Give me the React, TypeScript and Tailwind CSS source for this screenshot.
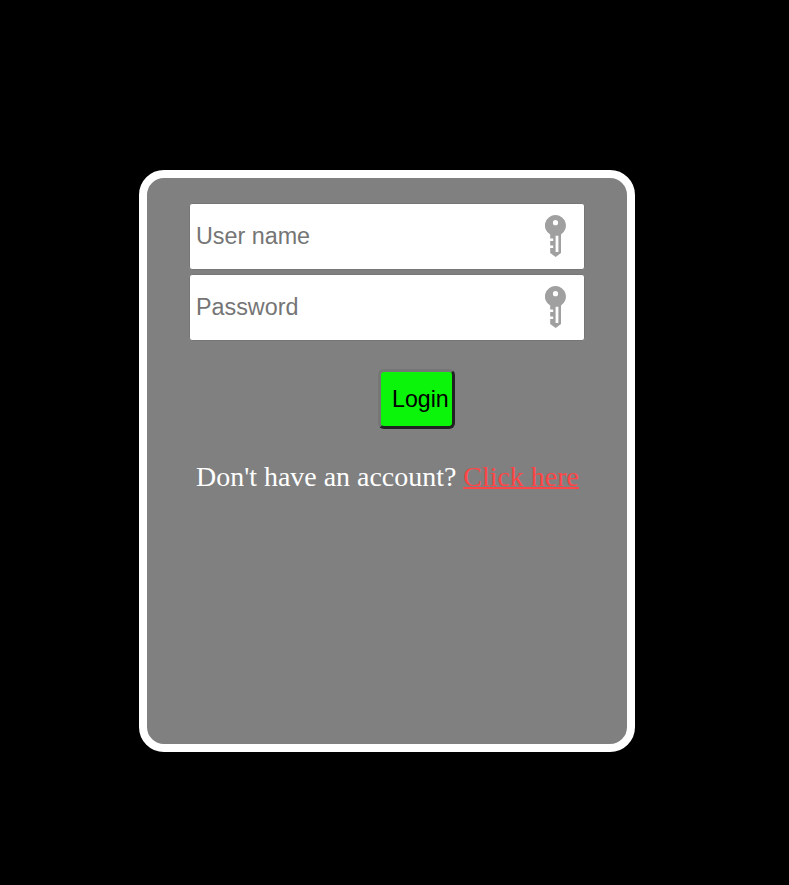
import React from "react";

function KeyIcon() {
  return (
    <svg width="21" height="42" viewBox="0 0 21 42" className="mb-0.5 block shrink-0" aria-hidden="true">
      <path
        fill="#a0a0a0"
        fillRule="evenodd"
        d="M10.5 0A10.5 10.5 0 0 1 16 19.4V38L10.7 42L5.2 38V33H8.2V30.6H5.2V26H8.2V23.6H5.2V19.6A10.5 10.5 0 0 1 10.5 0ZM10.5 5.1a2.6 2.6 0 1 0 0 5.2a2.6 2.6 0 1 0 0-5.2ZM10.6 20.8V37H13.4V20.8Z"
      />
    </svg>
  );
}

function Field({ type, placeholder }: { type: string; placeholder: string }) {
  return (
    <div className="flex h-[67px] w-[396px] items-center rounded-[3px] border border-[#767676] bg-white pr-[18px] pl-1.5">
      <input
        type={type}
        placeholder={placeholder}
        className="h-full min-w-0 flex-1 bg-transparent font-['Liberation_Sans',Arial,sans-serif] text-[23.33px] text-black outline-none placeholder:text-[#757575]"
      />
      <KeyIcon />
    </div>
  );
}

export default function App() {
  return (
    <main className="h-[885px] w-full overflow-hidden bg-black pt-[170px] pl-[139px]">
      <form className="flex h-[582px] w-[496px] flex-col items-center rounded-[25px] border-8 border-white bg-[#808080] pt-[25px]">
        <div className="flex flex-col gap-1">
          <Field type="text" placeholder="User name" />
          <Field type="password" placeholder="Password" />
        </div>
        <button
          type="button"
          className="mt-7 ml-[59px] h-[60px] w-[77px] rounded-[6px] border-[3px] border-t-[#767676] border-r-[#212121] border-b-[#212121] border-l-[#767676] bg-[#0bf50b] pl-[11px] text-left font-['Liberation_Sans',Arial,sans-serif] text-[23.2px] text-black"
        >
          Login
        </button>
        <p className="mt-8 ml-px font-['Liberation_Serif','Times_New_Roman',serif] text-[27.95px] leading-8 whitespace-nowrap text-white">
          Don't have an account?{" "}
          <a href="#" className="text-[#ff4545] underline decoration-2">
            Click here
          </a>
        </p>
      </form>
    </main>
  );
}
